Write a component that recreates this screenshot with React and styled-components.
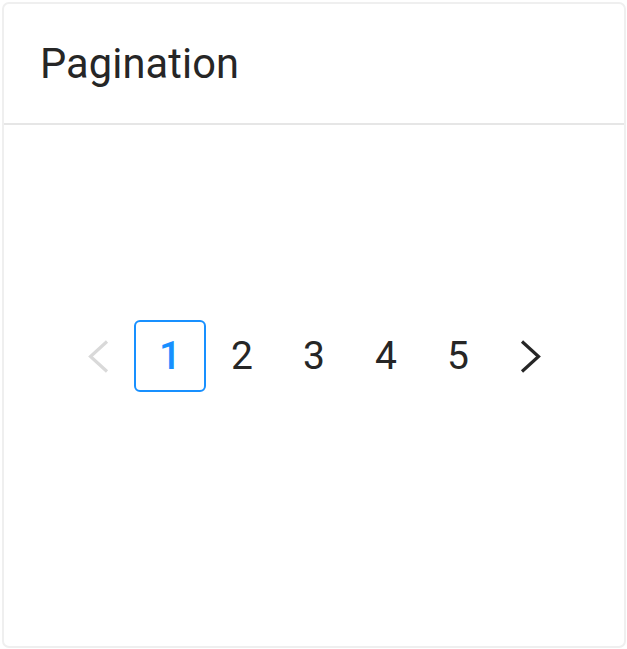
import React from 'react';
import styled, { createGlobalStyle } from 'styled-components';

const GlobalStyle = createGlobalStyle`
    html, body {
        margin: 0;
        padding: 0;
        background: #ffffff;
    }
    body {
        font-family: Roboto, "Liberation Sans", Arial, sans-serif;
        color: #262626;
    }
`;

const Page = styled.div`
    width: 627px;
    height: 649px;
    padding: 2px 1px 1px 2px;
    box-sizing: border-box;
`;

const Card = styled.div`
    height: 100%;
    box-sizing: border-box;
    border: 2px solid #efefef;
    border-radius: 7px;
    display: flex;
    flex-direction: column;
    background: #fff;
`;

const CardHead = styled.div`
    height: 121px;
    box-sizing: border-box;
    padding: 0 36px;
    display: flex;
    align-items: center;
    border-bottom: 2px solid #e6e6e6;
    font-size: 41.6px;
    font-weight: 400;
    color: #262626;
    letter-spacing: 0.1px;
`;

const CardBody = styled.div`
    flex: 1;
    display: flex;
    justify-content: center;
    padding-top: 195px;
`;

const List = styled.ul`
    list-style: none;
    margin: 0;
    padding: 0;
    display: flex;
    height: 72px;
`;

const Item = styled.li`
    width: 72px;
    height: 72px;
    box-sizing: border-box;
    display: flex;
    align-items: center;
    justify-content: center;
    border: 2.5px solid ${p => (p.$active ? '#1890ff' : 'transparent')};
    border-radius: 6px;
    font-size: 39px;
    font-weight: ${p => (p.$active ? 500 : 400)};
    color: ${p => (p.$active ? '#1890ff' : '#262626')};
    cursor: ${p => (p.$disabled ? 'not-allowed' : 'pointer')};
`;

const Arrow = styled.svg`
    width: 21px;
    height: 33px;
    display: block;
    stroke: ${p => (p.$disabled ? '#d9d9d9' : '#262626')};
    stroke-width: 3.2;
    fill: none;
`;

function Chevron({ dir, disabled }) {
    const d = dir === 'left' ? 'M19 1.5 L2.5 16.5 L19 31.5' : 'M2 1.5 L18.5 16.5 L2 31.5';
    return (
        <Arrow viewBox="0 0 21 33" $disabled={disabled}>
            <path d={d} strokeLinecap="butt" strokeLinejoin="miter" />
        </Arrow>
    );
}

export default function App() {
    const pages = [1, 2, 3, 4, 5];
    const current = 1;

    return (
        <Page>
            <GlobalStyle />
            <Card>
                <CardHead>Pagination</CardHead>
                <CardBody>
                    <List>
                        <Item $disabled>
                            <Chevron dir="left" disabled />
                        </Item>
                        {pages.map(n => (
                            <Item key={n} $active={n === current}>{n}</Item>
                        ))}
                        <Item>
                            <Chevron dir="right" />
                        </Item>
                    </List>
                </CardBody>
            </Card>
        </Page>
    );
}
